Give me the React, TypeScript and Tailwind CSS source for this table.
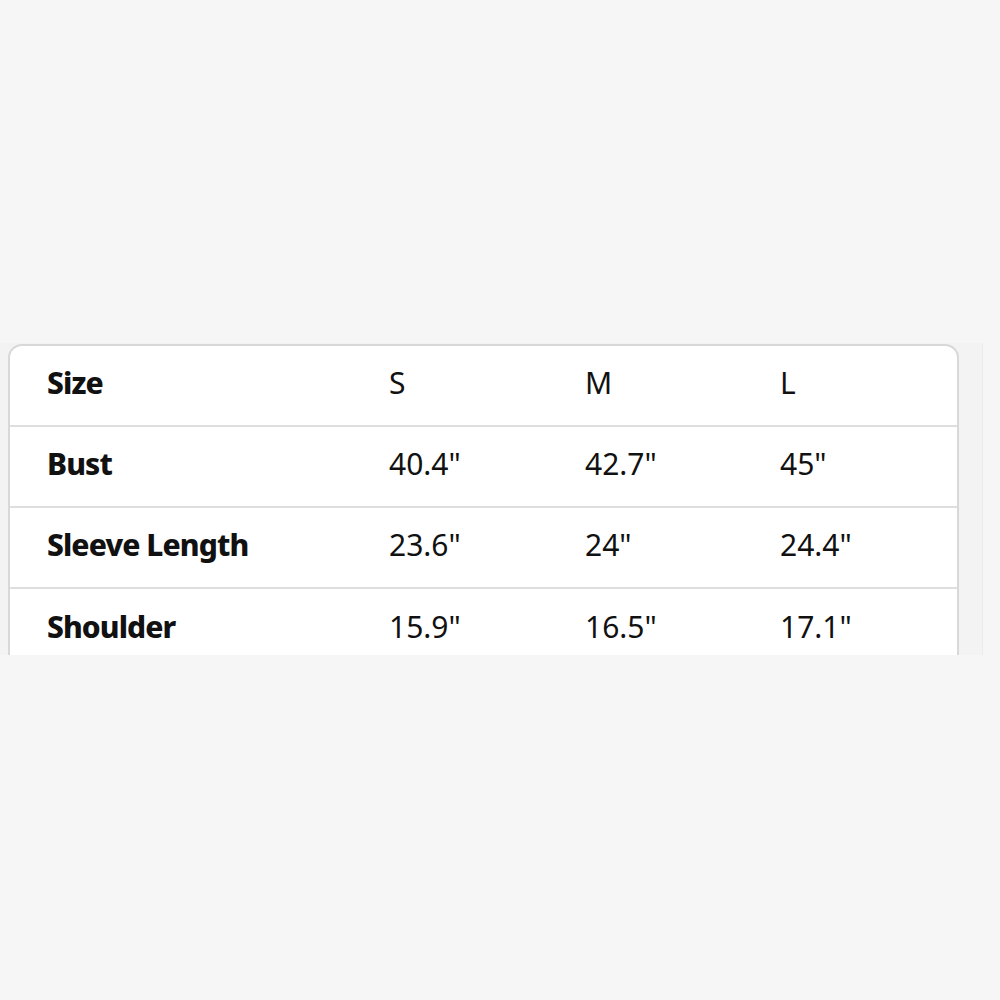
const rows = [
  { label: "Size", values: ["S", "M", "L"] },
  { label: "Bust", values: ['40.4"', '42.7"', '45"'] },
  { label: "Sleeve Length", values: ['23.6"', '24"', '24.4"'] },
  { label: "Shoulder", values: ['15.9"', '16.5"', '17.1"'] },
];

export default function App() {
  return (
    <div className="min-h-screen bg-[#f6f6f6] pt-[343px] font-['Noto_Sans',sans-serif] text-[#111111]">
      {/* cropped size chart */}
      <div className="h-[312px] w-[983px] overflow-hidden border-r border-[#ebebeb] bg-[#f3f3f3] pl-2 pt-px">
        <div className="w-[951px] rounded-t-[14px] border-2 border-b-0 border-[#d8d8d8] bg-white">
          {rows.map((row) => (
            <div
              key={row.label}
              className="grid h-[81px] grid-cols-[342px_196px_195px_1fr] items-center border-b-2 border-[#dedede] pb-[5px] pl-[37px] text-[30px] leading-none last:border-b-0"
            >
              <div className="font-extrabold tracking-[-0.9px]">{row.label}</div>
              {row.values.map((v, i) => (
                <div key={i}>{v}</div>
              ))}
            </div>
          ))}
        </div>
      </div>
    </div>
  );
}
